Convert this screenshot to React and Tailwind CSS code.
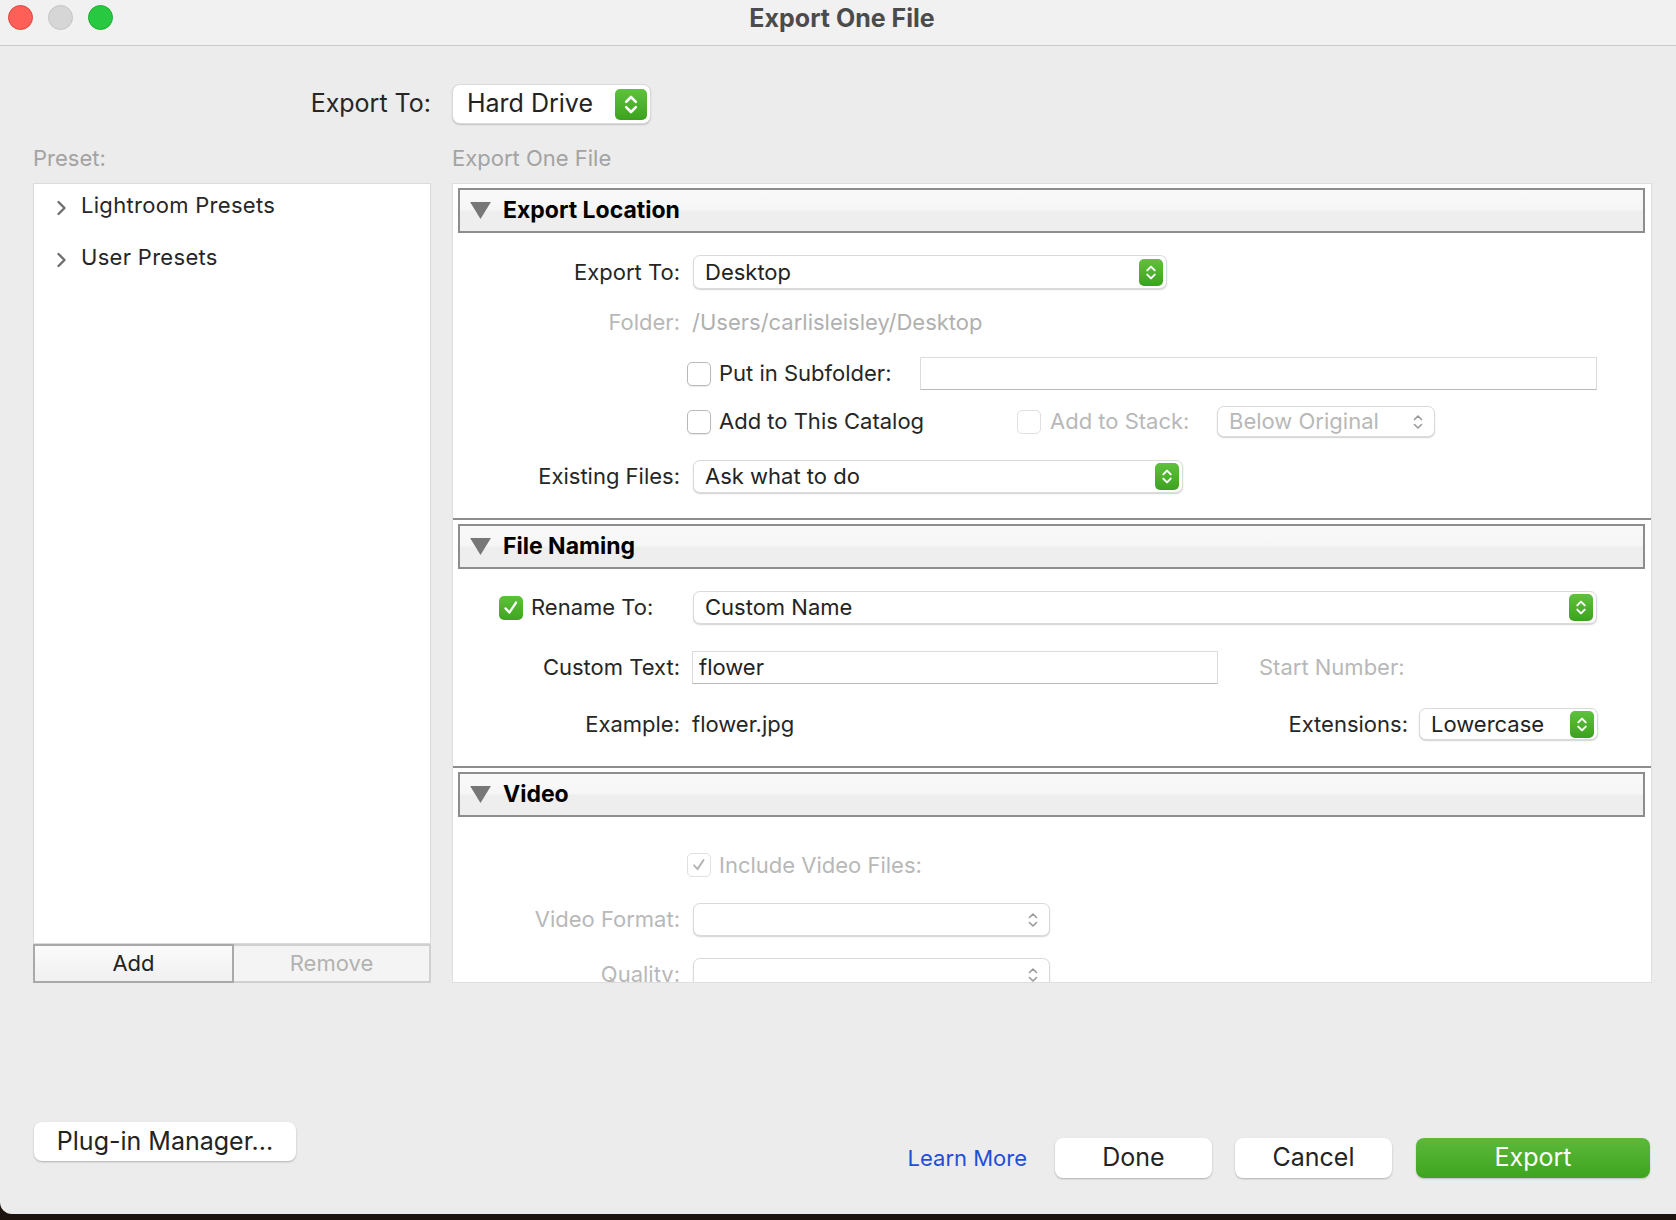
import React from 'react';

const Stepper = ({ big }) => (
  <div
    className={`flex items-center justify-center rounded-[5px] bg-gradient-to-b from-[#5fc23d] to-[#3ca21d] ${
      big ? 'w-[32px] h-[31px]' : 'w-[24px] h-[27px]'
    }`}
  >
    <svg viewBox="0 0 24 27" className={big ? 'w-[26px] h-[29px]' : 'w-[20px] h-[23px]'}>
      <path d="M7.5 11 L12 6.5 L16.5 11" fill="none" stroke="white" strokeWidth="2.4" strokeLinecap="round" strokeLinejoin="round" />
      <path d="M7.5 16 L12 20.5 L16.5 16" fill="none" stroke="white" strokeWidth="2.4" strokeLinecap="round" strokeLinejoin="round" />
    </svg>
  </div>
);

const GrayChevrons = () => (
  <svg viewBox="0 0 12 20" className="w-[12px] h-[20px] mr-[10px]">
    <path d="M2.5 7.5 L6 4 L9.5 7.5" fill="none" stroke="#9a9a9a" strokeWidth="1.6" strokeLinecap="round" strokeLinejoin="round" />
    <path d="M2.5 12.5 L6 16 L9.5 12.5" fill="none" stroke="#9a9a9a" strokeWidth="1.6" strokeLinecap="round" strokeLinejoin="round" />
  </svg>
);

const Popup = ({ value, className = '', disabled, big }) => (
  <div
    className={`flex items-center bg-white rounded-[7px] border border-[#dadada] shadow-[0_1px_1.5px_rgba(0,0,0,0.18)] ${className}`}
  >
    <span
      className={`flex-1 whitespace-nowrap ${big ? 'pl-[14px] text-[25px]' : 'pl-[11px] text-[22px]'} ${
        disabled ? 'text-[#b8b8b8]' : 'text-[#232323]'
      }`}
    >
      {value}
    </span>
    {disabled ? <GrayChevrons /> : <div className="mr-[3px]"><Stepper big={big} /></div>}
  </div>
);

const Checkbox = ({ checked, disabled }) => {
  if (checked && !disabled) {
    return (
      <div className="w-[24px] h-[24px] rounded-[5px] bg-gradient-to-b from-[#5cc13a] to-[#3ea620] flex items-center justify-center">
        <svg viewBox="0 0 24 24" className="w-[20px] h-[20px]">
          <path d="M5.5 12.5 L10 17.5 L18 5.5" fill="none" stroke="white" strokeWidth="2.8" strokeLinecap="round" strokeLinejoin="round" />
        </svg>
      </div>
    );
  }
  return (
    <div
      className={`w-[24px] h-[24px] rounded-[5px] bg-white border flex items-center justify-center ${
        disabled ? 'border-[#e0e0e0]' : 'border-[#b9b9b9] shadow-[0_1px_1px_rgba(0,0,0,0.08)]'
      }`}
    >
      {checked && (
        <svg viewBox="0 0 24 24" className="w-[18px] h-[18px]">
          <path d="M5.5 12.5 L10 17.5 L18 5.5" fill="none" stroke="#b5b5b5" strokeWidth="2.6" strokeLinecap="round" strokeLinejoin="round" />
        </svg>
      )}
    </div>
  );
};

const TextField = ({ value, className = '' }) => (
  <div className={`bg-white border border-[#dcdcdc] border-b-[#b9b9b9] flex items-center ${className}`}>
    <span className="pl-[6px] text-[22px] text-[#232323]">{value}</span>
  </div>
);

const Label = ({ children, gray }) => (
  <div className={`w-[227px] text-right text-[22px] whitespace-nowrap ${gray ? 'text-[#b8b8b8]' : 'text-[#262626]'}`}>
    {children}
  </div>
);

const SectionHeader = ({ title }) => (
  <div className="ml-[5px] mr-[6px] h-[45px] border-2 border-[#8d8d8d] bg-[linear-gradient(#f9f9f9_0%,#f6f6f6_48%,#eeeeee_52%,#eeeeee_100%)] flex items-center">
    <svg viewBox="0 0 22 18" className="w-[21px] h-[17px] ml-[10px]">
      <path d="M0 0 L22 0 L11 18 Z" fill="#777777" />
    </svg>
    <span className="ml-[12px] text-[23px] font-bold text-black">{title}</span>
  </div>
);

const Divider = () => <div className="h-[2px] bg-[#8d8d8d]" />;

const Chevron = () => (
  <svg viewBox="0 0 12 18" className="w-[13px] h-[18px] mt-[6px]">
    <path d="M3 3 L9 9 L3 15" fill="none" stroke="#6f6f6f" strokeWidth="2.4" strokeLinecap="round" strokeLinejoin="round" />
  </svg>
);

const Button = ({ children, className = '' }) => (
  <div
    className={`bg-white rounded-[8px] shadow-[0_1px_2px_rgba(0,0,0,0.25)] flex items-center justify-center text-[25px] text-[#232323] ${className}`}
  >
    {children}
  </div>
);

export default function App() {
  return (
    <div className="w-[1676px] h-[1220px] bg-[#1e140f] overflow-hidden font-[Inter,sans-serif]">
      <div className="h-[1214px] bg-[#ececec] rounded-bl-[12px] flex flex-col">
        {/* title bar */}
        <div className="h-[46px] bg-[#f1f1f1] border-b border-[#c9c9c9] flex items-start pt-[5px] pl-[8px] relative">
          <div className="flex gap-[15px]">
            <div className="w-[25px] h-[25px] rounded-full bg-[#fe5f57] border border-[#e2463f]" />
            <div className="w-[25px] h-[25px] rounded-full bg-[#d6d6d6] border border-[#c4c4c4]" />
            <div className="w-[25px] h-[25px] rounded-full bg-[#28c840] border border-[#1fae33]" />
          </div>
          <div className="absolute left-0 right-0 top-0 pl-[8px] text-center text-[25px] font-bold text-[#4b4b4b] pointer-events-none">
            Export One File
          </div>
        </div>

        <div className="flex flex-col pl-[33px] pr-[24px]">
          {/* top export to */}
          <div className="flex items-center mt-[38px] h-[40px]">
            <div className="w-[398px] text-right text-[25px] text-[#262626]">Export To:</div>
            <Popup value="Hard Drive" big className="ml-[21px] w-[199px] h-[40px] rounded-[8px]" />
          </div>

          <div className="flex mt-[23px] h-[22px] items-center text-[22px] text-[#a3a3a3]">
            <div className="w-[398px]">Preset:</div>
            <div className="ml-[21px]">Export One File</div>
          </div>

          <div className="flex gap-[21px] mt-[14px]">
            {/* left column */}
            <div className="w-[398px] flex flex-col">
              <div className="h-[761px] bg-white border border-[#dcdcdc]">
                <div className="flex items-center h-[42px] pl-[21px]">
                  <Chevron />
                  <span className="ml-[13px] text-[22px] tracking-[0.3px] text-[#262626]">Lightroom Presets</span>
                </div>
                <div className="flex items-center h-[42px] mt-[10px] pl-[21px]">
                  <Chevron />
                  <span className="ml-[13px] text-[22px] tracking-[0.3px] text-[#262626]">User Presets</span>
                </div>
              </div>
              <div className="flex h-[39px]">
                <div className="w-[201px] border-2 border-[#a9a9a9] bg-gradient-to-b from-[#fbfbfb] to-[#f0f0f0] flex items-center justify-center text-[22px] text-[#232323]">
                  Add
                </div>
                <div className="flex-1 border-2 border-l-0 border-[#d0d0d0] bg-[#f4f4f4] flex items-center justify-center text-[22px] text-[#b2b2b2]">
                  Remove
                </div>
              </div>
            </div>

            {/* right panel */}
            <div className="w-[1200px] h-[800px] bg-white border border-[#dedede] overflow-hidden pt-[4px]">
              <SectionHeader title="Export Location" />
              <div className="flex items-center mt-[22px] h-[34px]">
                <Label>Export To:</Label>
                <Popup value="Desktop" className="ml-[13px] w-[474px] h-[34px]" />
              </div>
              <div className="flex items-center mt-[17px] h-[32px]">
                <Label gray>Folder:</Label>
                <span className="ml-[12px] text-[22px] text-[#b0b0b0]">/Users/carlisleisley/Desktop</span>
              </div>
              <div className="flex items-center mt-[19px] h-[33px]">
                <div className="w-[234px]" />
                <Checkbox />
                <span className="ml-[8px] text-[22px] text-[#262626] w-[201px]">Put in Subfolder:</span>
                <TextField className="w-[677px] h-[33px]" />
              </div>
              <div className="flex items-center mt-[16px] h-[31px]">
                <div className="w-[234px]" />
                <Checkbox />
                <span className="ml-[8px] text-[22px] text-[#262626] w-[298px]">Add to This Catalog</span>
                <Checkbox disabled />
                <span className="ml-[9px] text-[22px] text-[#b8b8b8] w-[167px]">Add to Stack:</span>
                <Popup value="Below Original" disabled className="w-[218px] h-[31px]" />
              </div>
              <div className="flex items-center mt-[23px] h-[33px]">
                <Label>Existing Files:</Label>
                <Popup value="Ask what to do" className="ml-[13px] w-[490px] h-[33px]" />
              </div>
              <div className="mt-[25px]">
                <Divider />
              </div>
              <div className="mt-[4px]">
                <SectionHeader title="File Naming" />
              </div>
              <div className="flex items-center mt-[22px] h-[33px]">
                <div className="w-[46px]" />
                <Checkbox checked />
                <span className="ml-[8px] w-[162px] text-[22px] text-[#262626]">Rename To:</span>
                <Popup value="Custom Name" className="w-[904px] h-[33px]" />
              </div>
              <div className="flex items-center mt-[27px] h-[33px]">
                <Label>Custom Text:</Label>
                <TextField value="flower" className="ml-[12px] w-[526px] h-[33px]" />
                <span className="ml-[41px] text-[22px] text-[#b8b8b8]">Start Number:</span>
              </div>
              <div className="flex items-center mt-[24px] h-[32px]">
                <Label>Example:</Label>
                <span className="ml-[12px] text-[22px] text-[#262626]">flower.jpg</span>
                <span className="ml-auto text-[22px] text-[#262626]">Extensions:</span>
                <Popup value="Lowercase" className="ml-[11px] mr-[53px] w-[179px] h-[32px]" />
              </div>
              <div className="mt-[26px]">
                <Divider />
              </div>
              <div className="mt-[4px]">
                <SectionHeader title="Video" />
              </div>
              <div className="flex items-center mt-[32px] h-[32px]">
                <div className="w-[234px]" />
                <Checkbox checked disabled />
                <span className="ml-[8px] text-[22px] text-[#b8b8b8]">Include Video Files:</span>
              </div>
              <div className="flex items-center mt-[22px] h-[33px]">
                <Label gray>Video Format:</Label>
                <Popup value="" disabled className="ml-[13px] w-[357px] h-[33px]" />
              </div>
              <div className="flex items-center mt-[22px] h-[33px]">
                <Label gray>Quality:</Label>
                <Popup value="" disabled className="ml-[13px] w-[357px] h-[33px]" />
              </div>
            </div>
          </div>

          {/* bottom buttons */}
          <div className="flex items-start mt-[139px]">
            <Button className="ml-[1px] w-[262px] h-[39px]">Plug-in Manager...</Button>
            <div className="ml-auto mr-[2px] mt-[16px] flex items-center">
              <span className="text-[22px] text-[#1f4fd8]">Learn More</span>
              <Button className="ml-[28px] w-[157px] h-[40px]">Done</Button>
              <Button className="ml-[23px] w-[157px] h-[40px]">Cancel</Button>
              <div className="ml-[24px] w-[234px] h-[40px] rounded-[8px] bg-gradient-to-b from-[#5cb93b] to-[#3da41d] shadow-[0_1px_2px_rgba(0,0,0,0.2)] flex items-center justify-center text-[25px] text-white">
                Export
              </div>
            </div>
          </div>
        </div>
      </div>
    </div>
  );
}
